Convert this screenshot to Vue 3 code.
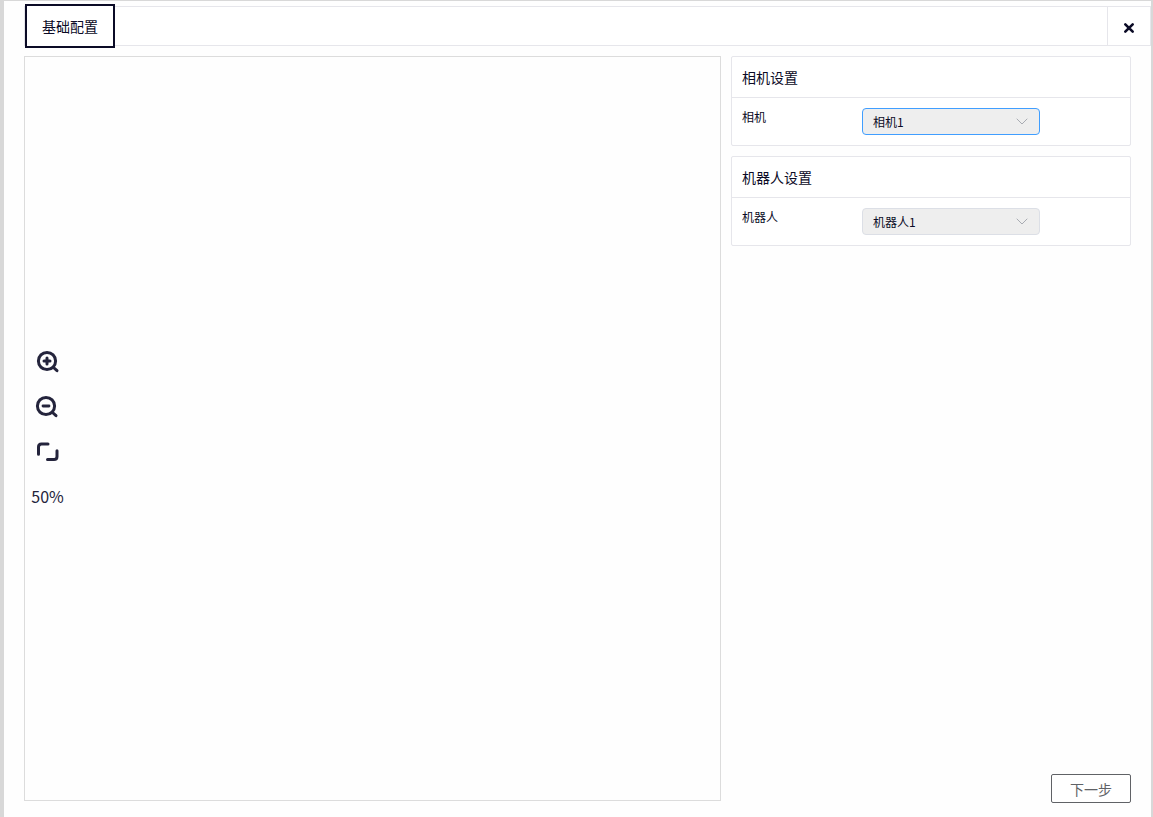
<script setup>
import { ref } from 'vue'

const scale = ref(50)
const zoom = (step) => {
  scale.value = Math.min(200, Math.max(10, scale.value + step))
}

const groups = ref([
  { id: 'camera', title: '相机设置', label: '相机', value: '相机1', options: ['相机1'], active: true },
  { id: 'robot', title: '机器人设置', label: '机器人', value: '机器人1', options: ['机器人1'], active: false },
])
</script>

<template>
  <div class="page">
    <header class="topbar">
      <button type="button" class="tab">基础配置</button>
      <button type="button" class="close" aria-label="关闭">
        <svg width="12" height="12" viewBox="0 0 12 12">
          <path d="M2.3 2.3 9.7 9.7M9.7 2.3 2.3 9.7" fill="none" stroke="currentColor" stroke-width="2.6" stroke-linecap="round" />
        </svg>
      </button>
    </header>

    <main class="content">
      <section class="viewer">
        <div class="tools">
          <button type="button" class="tool" aria-label="放大" @click="zoom(10)">
            <svg width="25" height="25" viewBox="0 0 25 25">
              <g fill="none" stroke="currentColor" stroke-linecap="round">
                <circle cx="12" cy="12" r="8.6" stroke-width="3" />
                <path d="M18.5 18.5 22 21.7" stroke-width="3" />
                <path d="M9 12H15M12 9V15" stroke-width="3" />
              </g>
            </svg>
          </button>
          <button type="button" class="tool" aria-label="缩小" @click="zoom(-10)">
            <svg width="25" height="25" viewBox="0 0 25 25">
              <g fill="none" stroke="currentColor" stroke-linecap="round">
                <circle cx="11" cy="12" r="8.6" stroke-width="3" />
                <path d="M17.5 18.5 21 21.7" stroke-width="3" />
                <path d="M8 12H14" stroke-width="2.8" />
              </g>
            </svg>
          </button>
          <button type="button" class="tool" aria-label="适应窗口" @click="scale = 50">
            <svg width="25" height="25" viewBox="0 0 25 25">
              <path d="M3.5 15.3V8Q3.5 5 6.5 5H13M22 11.7V17.5Q22 20.5 19 20.5H12.5" fill="none" stroke="currentColor" stroke-width="3" stroke-linecap="round" />
            </svg>
          </button>
          <span class="scale">{{ scale }}%</span>
        </div>
      </section>

      <aside class="sidebar">
        <section v-for="g in groups" :key="g.id" class="card">
          <h2 class="card-title">{{ g.title }}</h2>
          <div class="field">
            <label class="field-label" :for="g.id">{{ g.label }}</label>
            <div class="select-box">
              <select :id="g.id" v-model="g.value" class="select" :class="{ active: g.active }">
                <option v-for="o in g.options" :key="o">{{ o }}</option>
              </select>
              <svg class="arrow" width="12" height="12" viewBox="0 0 12 12">
                <path d="M1 3 6 8 11 3" fill="none" stroke="currentColor" stroke-linecap="round" />
              </svg>
            </div>
          </div>
        </section>
        <button type="button" class="next">下一步</button>
      </aside>
    </main>
  </div>
</template>

<style>
body {
  margin: 0;
}
</style>

<style scoped>
.page,
.page * {
  box-sizing: border-box;
}

.page {
  display: flex;
  flex-direction: column;
  gap: 10px;
  min-height: 100vh;
  padding: 5px 0 14px 20px;
  border: solid #d8d8d8;
  border-width: 1px 2px 0 4px;
  background: #fefefe;
  color: #0b0b26;
  font-family: "Noto Sans CJK SC", sans-serif;
}

button,
select {
  margin: 0;
  padding: 0;
  font-family: inherit;
  color: inherit;
  cursor: pointer;
}

.topbar {
  display: flex;
  justify-content: space-between;
  height: 40px;
  border: 1px solid #e6e6eb;
  background: #fff;
}

.tab {
  margin: -3px 0;
  padding: 0 15px;
  border: 2px solid #0b0b26;
  background: #fff;
  font-size: 14px;
}

.close {
  display: flex;
  align-items: center;
  justify-content: center;
  width: 43px;
  padding-top: 4px;
  border: 0;
  border-left: 1px solid #e6e6eb;
  background: none;
}

.content {
  display: flex;
  flex: 1;
  gap: 10px;
  padding-right: 20px;
}

.viewer {
  display: flex;
  align-items: center;
  flex: 1;
  margin-bottom: 2px;
  padding-top: 1px;
  border: 1px solid #dcdcdc;
}

.tools {
  display: flex;
  flex-direction: column;
  width: 45px;
  color: #24243c;
}

.tool {
  display: flex;
  align-items: center;
  justify-content: center;
  height: 45px;
  border: 0;
  background: none;
}

.scale {
  font-size: 16px;
  line-height: 45px;
  text-align: center;
}

.sidebar {
  display: flex;
  flex-direction: column;
  gap: 10px;
  width: 400px;
}

.card {
  border: 1px solid #e6e6eb;
  border-radius: 2px;
  background: #fff;
}

.card-title {
  margin: 0;
  padding: 0 10px;
  border-bottom: 1px solid #e6e6eb;
  font-size: 14px;
  font-weight: 400;
  line-height: 40px;
}

.field {
  display: flex;
  align-items: flex-start;
  padding: 10px;
}

.field-label {
  width: 120px;
  font-size: 12px;
  line-height: 18px;
}

.select-box {
  display: grid;
  align-items: center;
  width: 178px;
}

.select,
.arrow {
  grid-area: 1 / 1;
}

.select {
  width: 100%;
  height: 27px;
  padding: 0 30px 0 10px;
  border: 1px solid #dcdfe6;
  border-radius: 4px;
  outline: 0;
  appearance: none;
  background: #eee;
  font-size: 12px;
}

.select.active {
  border-color: #409eff;
}

.arrow {
  justify-self: end;
  margin-right: 12px;
  color: #a8abb2;
  pointer-events: none;
}

.next {
  align-self: flex-end;
  width: 80px;
  height: 29px;
  margin-top: auto;
  border: 1px solid #606266;
  border-radius: 2px;
  background: #fff;
  color: #606266;
  font-size: 14px;
}
</style>
